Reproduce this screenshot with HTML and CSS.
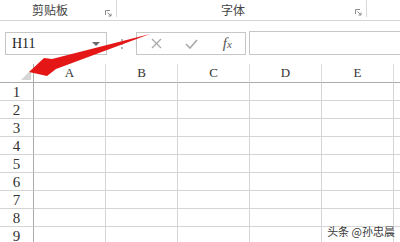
FILE: index.html
```html
<!DOCTYPE html>
<html lang="zh-CN">
<head>
    <meta charset="UTF-8">
    <title>Excel - 全选</title>
    <link rel="stylesheet" href="styles.css">
</head>
<body>
    <!-- Ribbon group labels -->
    <div class="ribbon">
        <div class="group group-clip">
            <span class="group-label">剪贴板</span>
            <svg class="launcher" width="7" height="7" viewBox="0 0 7 7"><path d="M0.5 5V0.5H5" fill="none" stroke="#8a8a8a"/><path d="M2.5 2.5L6 6M6 3.5V6H3.5" fill="none" stroke="#8a8a8a"/></svg>
        </div>
        <div class="group group-font">
            <span class="group-label">字体</span>
            <svg class="launcher" width="7" height="7" viewBox="0 0 7 7"><path d="M0.5 5V0.5H5" fill="none" stroke="#8a8a8a"/><path d="M2.5 2.5L6 6M6 3.5V6H3.5" fill="none" stroke="#8a8a8a"/></svg>
        </div>
    </div>

    <!-- Name box + formula bar -->
    <div class="formula-bar">
        <div class="name-box">
            <span class="name-text">H11</span>
            <svg class="drop" width="8" height="4" viewBox="0 0 8 4"><path d="M0 0H8L4 4Z" fill="#6b6b6b"/></svg>
        </div>
        <div class="grip"><i></i><i></i><i></i></div>
        <div class="fx-buttons">
            <span class="fx-slot">
                <svg width="11" height="11" viewBox="0 0 11 11"><path d="M1 1L10 10M10 1L1 10" stroke="#a8a8a8" stroke-width="1.3"/></svg>
            </span>
            <span class="fx-slot">
                <svg width="13" height="10" viewBox="0 0 13 10"><path d="M1 5L5 9L12 1" fill="none" stroke="#a8a8a8" stroke-width="1.6"/></svg>
            </span>
            <span class="fx-slot fx-text">f<small>x</small></span>
        </div>
        <div class="formula-input"></div>
    </div>

    <!-- Worksheet grid -->
    <div class="sheet">
        <div class="cell corner"><span class="select-all"></span></div>
        <div class="cell col-head">A</div>
        <div class="cell col-head">B</div>
        <div class="cell col-head">C</div>
        <div class="cell col-head">D</div>
        <div class="cell col-head">E</div>
        <div class="cell col-head"></div>

        <div class="cell row-head">1</div><div class="cell"></div><div class="cell"></div><div class="cell"></div><div class="cell"></div><div class="cell"></div><div class="cell"></div>
        <div class="cell row-head">2</div><div class="cell"></div><div class="cell"></div><div class="cell"></div><div class="cell"></div><div class="cell"></div><div class="cell"></div>
        <div class="cell row-head">3</div><div class="cell"></div><div class="cell"></div><div class="cell"></div><div class="cell"></div><div class="cell"></div><div class="cell"></div>
        <div class="cell row-head">4</div><div class="cell"></div><div class="cell"></div><div class="cell"></div><div class="cell"></div><div class="cell"></div><div class="cell"></div>
        <div class="cell row-head">5</div><div class="cell"></div><div class="cell"></div><div class="cell"></div><div class="cell"></div><div class="cell"></div><div class="cell"></div>
        <div class="cell row-head">6</div><div class="cell"></div><div class="cell"></div><div class="cell"></div><div class="cell"></div><div class="cell"></div><div class="cell"></div>
        <div class="cell row-head">7</div><div class="cell"></div><div class="cell"></div><div class="cell"></div><div class="cell"></div><div class="cell"></div><div class="cell"></div>
        <div class="cell row-head">8</div><div class="cell"></div><div class="cell"></div><div class="cell"></div><div class="cell"></div><div class="cell"></div><div class="cell"></div>
        <div class="cell row-head">9</div><div class="cell"></div><div class="cell"></div><div class="cell"></div><div class="cell"></div><div class="cell"></div><div class="cell"></div>
    </div>

    <!-- Red annotation arrow pointing at the select-all corner -->
    <svg class="arrow" width="400" height="242" viewBox="0 0 400 242">
        <polygon points="150,34 52,59 44,58 29,72 47,76 56,69" fill="#e51616"/>
    </svg>

    <div class="watermark">头条 @孙忠晨</div>
</body>
</html>
```

FILE: styles.css
```css
* {
    box-sizing: border-box;
}
html, body {
    margin: 0;
    width: 400px;
    height: 242px;
    overflow: hidden;
    background: #fff;
}
body {
    position: relative;
    font-family: "Noto Sans CJK SC", "Noto Sans", sans-serif;
    color: #333;
}

/* ribbon */
.ribbon {
    display: flex;
    align-items: flex-start;
    height: 21px;
    border-bottom: 1px solid #d5d5d5;
}
.group {
    display: flex;
    align-items: flex-start;
    height: 17px;
    border-right: 1px solid #d8d8d8;
}
.group-clip {
    width: 117px;
}
.group-font {
    width: 250px;
}
.group-label {
    font-size: 12px;
    line-height: 20px;
    color: #444;
}
.group-clip .group-label {
    margin-left: 32px;
}
.group-font .group-label {
    margin-left: 104px;
}
.launcher {
    margin-left: auto;
    margin-right: 4px;
    margin-top: 10px;
}
.group-font .launcher {
    margin-top: 9px;
}

/* formula bar */
.formula-bar {
    display: flex;
    align-items: flex-start;
    height: 43px;
    padding-top: 10px;
}
.name-box {
    display: flex;
    align-items: center;
    width: 102px;
    height: 23px;
    margin-left: 5px;
    margin-top: 1px;
    padding-left: 6px;
    border: 1px solid #c6c6c6;
}
.name-text {
    font-family: "Liberation Serif", "DejaVu Serif", serif;
    font-size: 14px;
    color: #222;
}
.drop {
    margin-left: auto;
    margin-right: 6px;
}
.grip {
    display: flex;
    flex-direction: column;
    gap: 2px;
    margin-left: 14px;
    margin-top: 8px;
}
.grip i {
    display: block;
    width: 2px;
    height: 2px;
    background: #b5b5b5;
}
.fx-buttons {
    display: flex;
    align-items: center;
    width: 110px;
    height: 23px;
    margin-left: 13px;
    margin-top: 1px;
    padding-left: 2px;
    border: 1px solid #c6c6c6;
}
.fx-slot {
    display: flex;
    justify-content: center;
    align-items: center;
    width: 36px;
    height: 100%;
}
.fx-text {
    font-family: "Liberation Serif", serif;
    font-style: italic;
    font-size: 15px;
    color: #555;
}
.fx-text small {
    font-size: 11px;
}
.formula-input {
    flex: 1;
    height: 24px;
    margin-left: 3px;
    border: 1px solid #c6c6c6;
    border-right: none;
}

/* sheet grid */
.sheet {
    display: grid;
    grid-template-columns: 34px repeat(6, 72px);
    grid-template-rows: 19px repeat(9, 18px);
    width: 466px;
}
.cell {
    border-right: 1px solid #d4d4d4;
    border-bottom: 1px solid #d4d4d4;
}
.col-head, .row-head {
    display: flex;
    justify-content: center;
    align-items: center;
    font-family: "Liberation Serif", "DejaVu Serif", serif;
    color: #333;
}
.col-head {
    font-size: 13px;
    border-bottom-color: #ababab;
    border-right-color: #dcdcdc;
}
.row-head {
    font-size: 15px;
    border-right-color: #ababab;
    padding-top: 1px;
}
.corner {
    display: flex;
    justify-content: flex-end;
    align-items: flex-end;
    padding: 0 2px 2px 0;
    border-right-color: #ababab;
    border-bottom-color: #ababab;
}
.select-all {
    width: 0;
    height: 0;
    border-left: 10px solid transparent;
    border-bottom: 10px solid #d6d6d6;
}

/* overlays */
.arrow {
    position: absolute;
    top: 0;
    left: 0;
    pointer-events: none;
}
.watermark {
    position: absolute;
    right: 5px;
    bottom: 3px;
    font-size: 11px;
    color: #3a3a3a;
    text-shadow: 0 0 2px #fff, 0 0 2px #fff;
}
```
